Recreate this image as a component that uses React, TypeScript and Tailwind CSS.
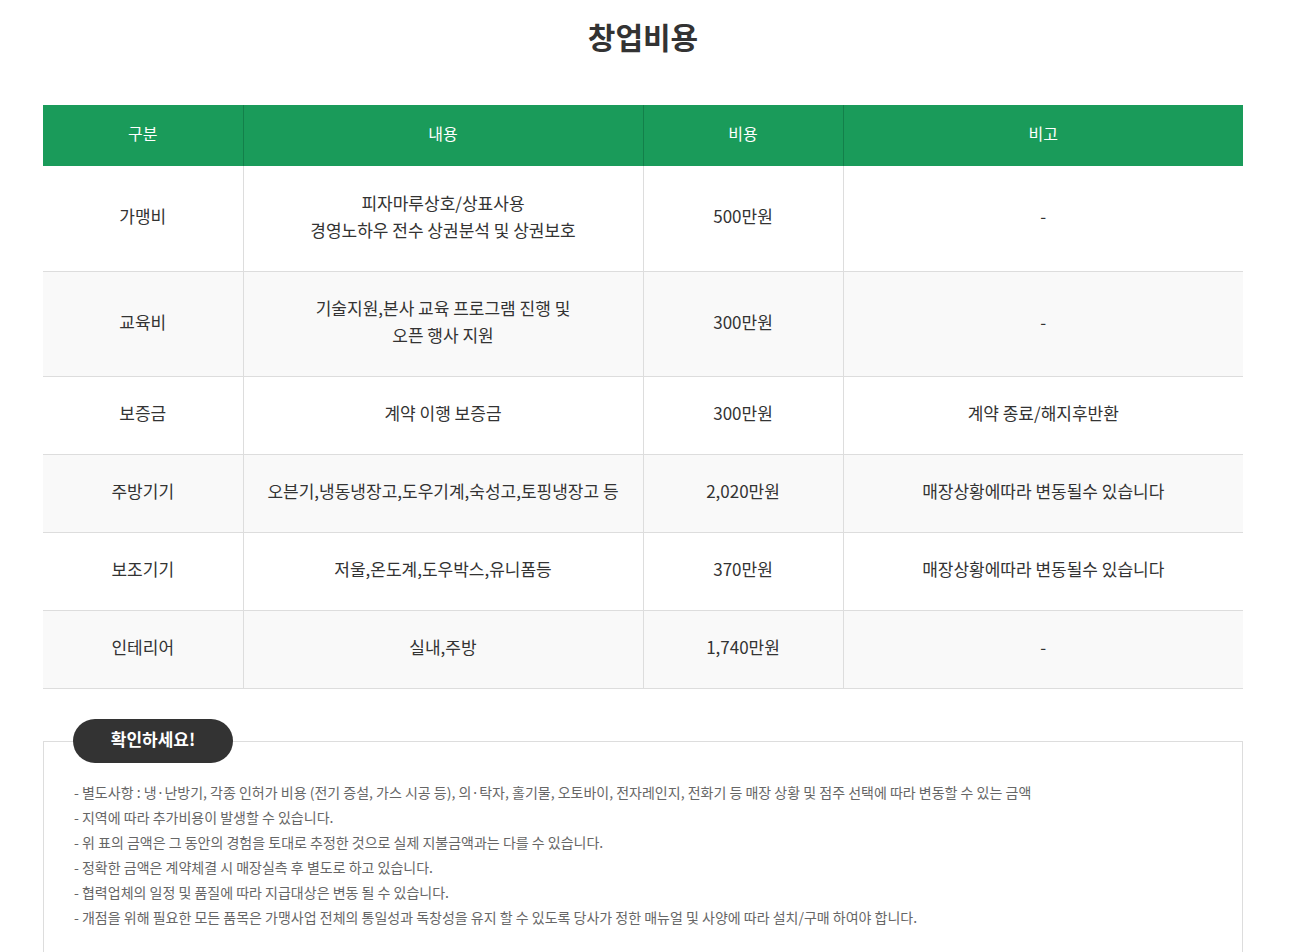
const rows = [
  { name: "가맹비", content: ["피자마루상호/상표사용", "경영노하우 전수 상권분석 및 상권보호"], cost: "500만원", note: "-", h: "h-[105px]" },
  { name: "교육비", content: ["기술지원,본사 교육 프로그램 진행 및", "오픈 행사 지원"], cost: "300만원", note: "-", h: "h-[105px]" },
  { name: "보증금", content: ["계약 이행 보증금"], cost: "300만원", note: "계약 종료/해지후반환", h: "h-[78px]" },
  { name: "주방기기", content: ["오븐기,냉동냉장고,도우기계,숙성고,토핑냉장고 등"], cost: "2,020만원", note: "매장상황에따라 변동될수 있습니다", h: "h-[78px]" },
  { name: "보조기기", content: ["저울,온도계,도우박스,유니폼등"], cost: "370만원", note: "매장상황에따라 변동될수 있습니다", h: "h-[78px]" },
  { name: "인테리어", content: ["실내,주방"], cost: "1,740만원", note: "-", h: "h-[78px]" },
];

const notes = [
  "- 별도사항 : 냉·난방기, 각종 인허가 비용 (전기 증설, 가스 시공 등), 의·탁자, 홀기물, 오토바이, 전자레인지, 전화기 등 매장 상황 및 점주 선택에 따라 변동할 수 있는 금액",
  "- 지역에 따라 추가비용이 발생할 수 있습니다.",
  "- 위 표의 금액은 그 동안의 경험을 토대로 추정한 것으로 실제 지불금액과는 다를 수 있습니다.",
  "- 정확한 금액은 계약체결 시 매장실측 후 별도로 하고 있습니다.",
  "- 협력업체의 일정 및 품질에 따라 지급대상은 변동 될 수 있습니다.",
  "- 개점을 위해 필요한 모든 품목은 가맹사업 전체의 통일성과 독창성을 유지 할 수 있도록 당사가 정한 매뉴얼 및 사양에 따라 설치/구매 하여야 합니다.",
];

export default function App() {
  return (
    <div className="min-h-[952px] bg-white text-[#333] font-['Noto_Sans_CJK_KR','Noto_Sans',sans-serif]">
      <div className="w-[1200px] ml-[43px]">
        <h1 className="pt-[14px] text-center text-[30px] font-bold leading-[44px] text-[#333]">창업비용</h1>

        <table className="mt-[47px] w-full border-collapse table-fixed">
          <colgroup>
            <col className="w-[200px]" />
            <col className="w-[400px]" />
            <col className="w-[200px]" />
            <col className="w-[400px]" />
          </colgroup>
          <thead>
            <tr className="h-[61px] bg-[#1a9b5a] text-white text-[16px]">
              <th className="pb-[6px] font-normal border-r border-[#13804a]">구분</th>
              <th className="pb-[6px] font-normal border-r border-[#13804a]">내용</th>
              <th className="pb-[6px] font-normal border-r border-[#13804a]">비용</th>
              <th className="pb-[6px] font-normal">비고</th>
            </tr>
          </thead>
          <tbody className="text-[17px] leading-[27px]">
            {rows.map((r, i) => (
              <tr key={r.name} className={`${r.h} border-b border-[#dddddd] ${i % 2 === 1 ? "bg-[#f9f9f9]" : "bg-white"}`}>
                <td className="pb-[5px] text-center border-r border-[#dddddd]">{r.name}</td>
                <td className="pb-[5px] text-center border-r border-[#dddddd]">
                  {r.content.map((c) => (
                    <div key={c}>{c}</div>
                  ))}
                </td>
                <td className="pb-[5px] text-center border-r border-[#dddddd]">{r.cost}</td>
                <td className="pb-[5px] text-center">{r.note}</td>
              </tr>
            ))}
          </tbody>
        </table>

        <div className="relative mt-[52px] border border-[#dddddd] pt-[38px] pb-[30px] pl-[30px]">
          <div className="absolute left-[29px] top-[-23px] w-[160px] h-[44px] pb-[3px] rounded-full bg-[#333] text-white text-[17px] font-bold flex items-center justify-center">
            확인하세요!
          </div>
          <ul className="text-[14px] leading-[25px] text-[#666]">
            {notes.map((n) => (
              <li key={n}>{n}</li>
            ))}
          </ul>
        </div>
      </div>
    </div>
  );
}
